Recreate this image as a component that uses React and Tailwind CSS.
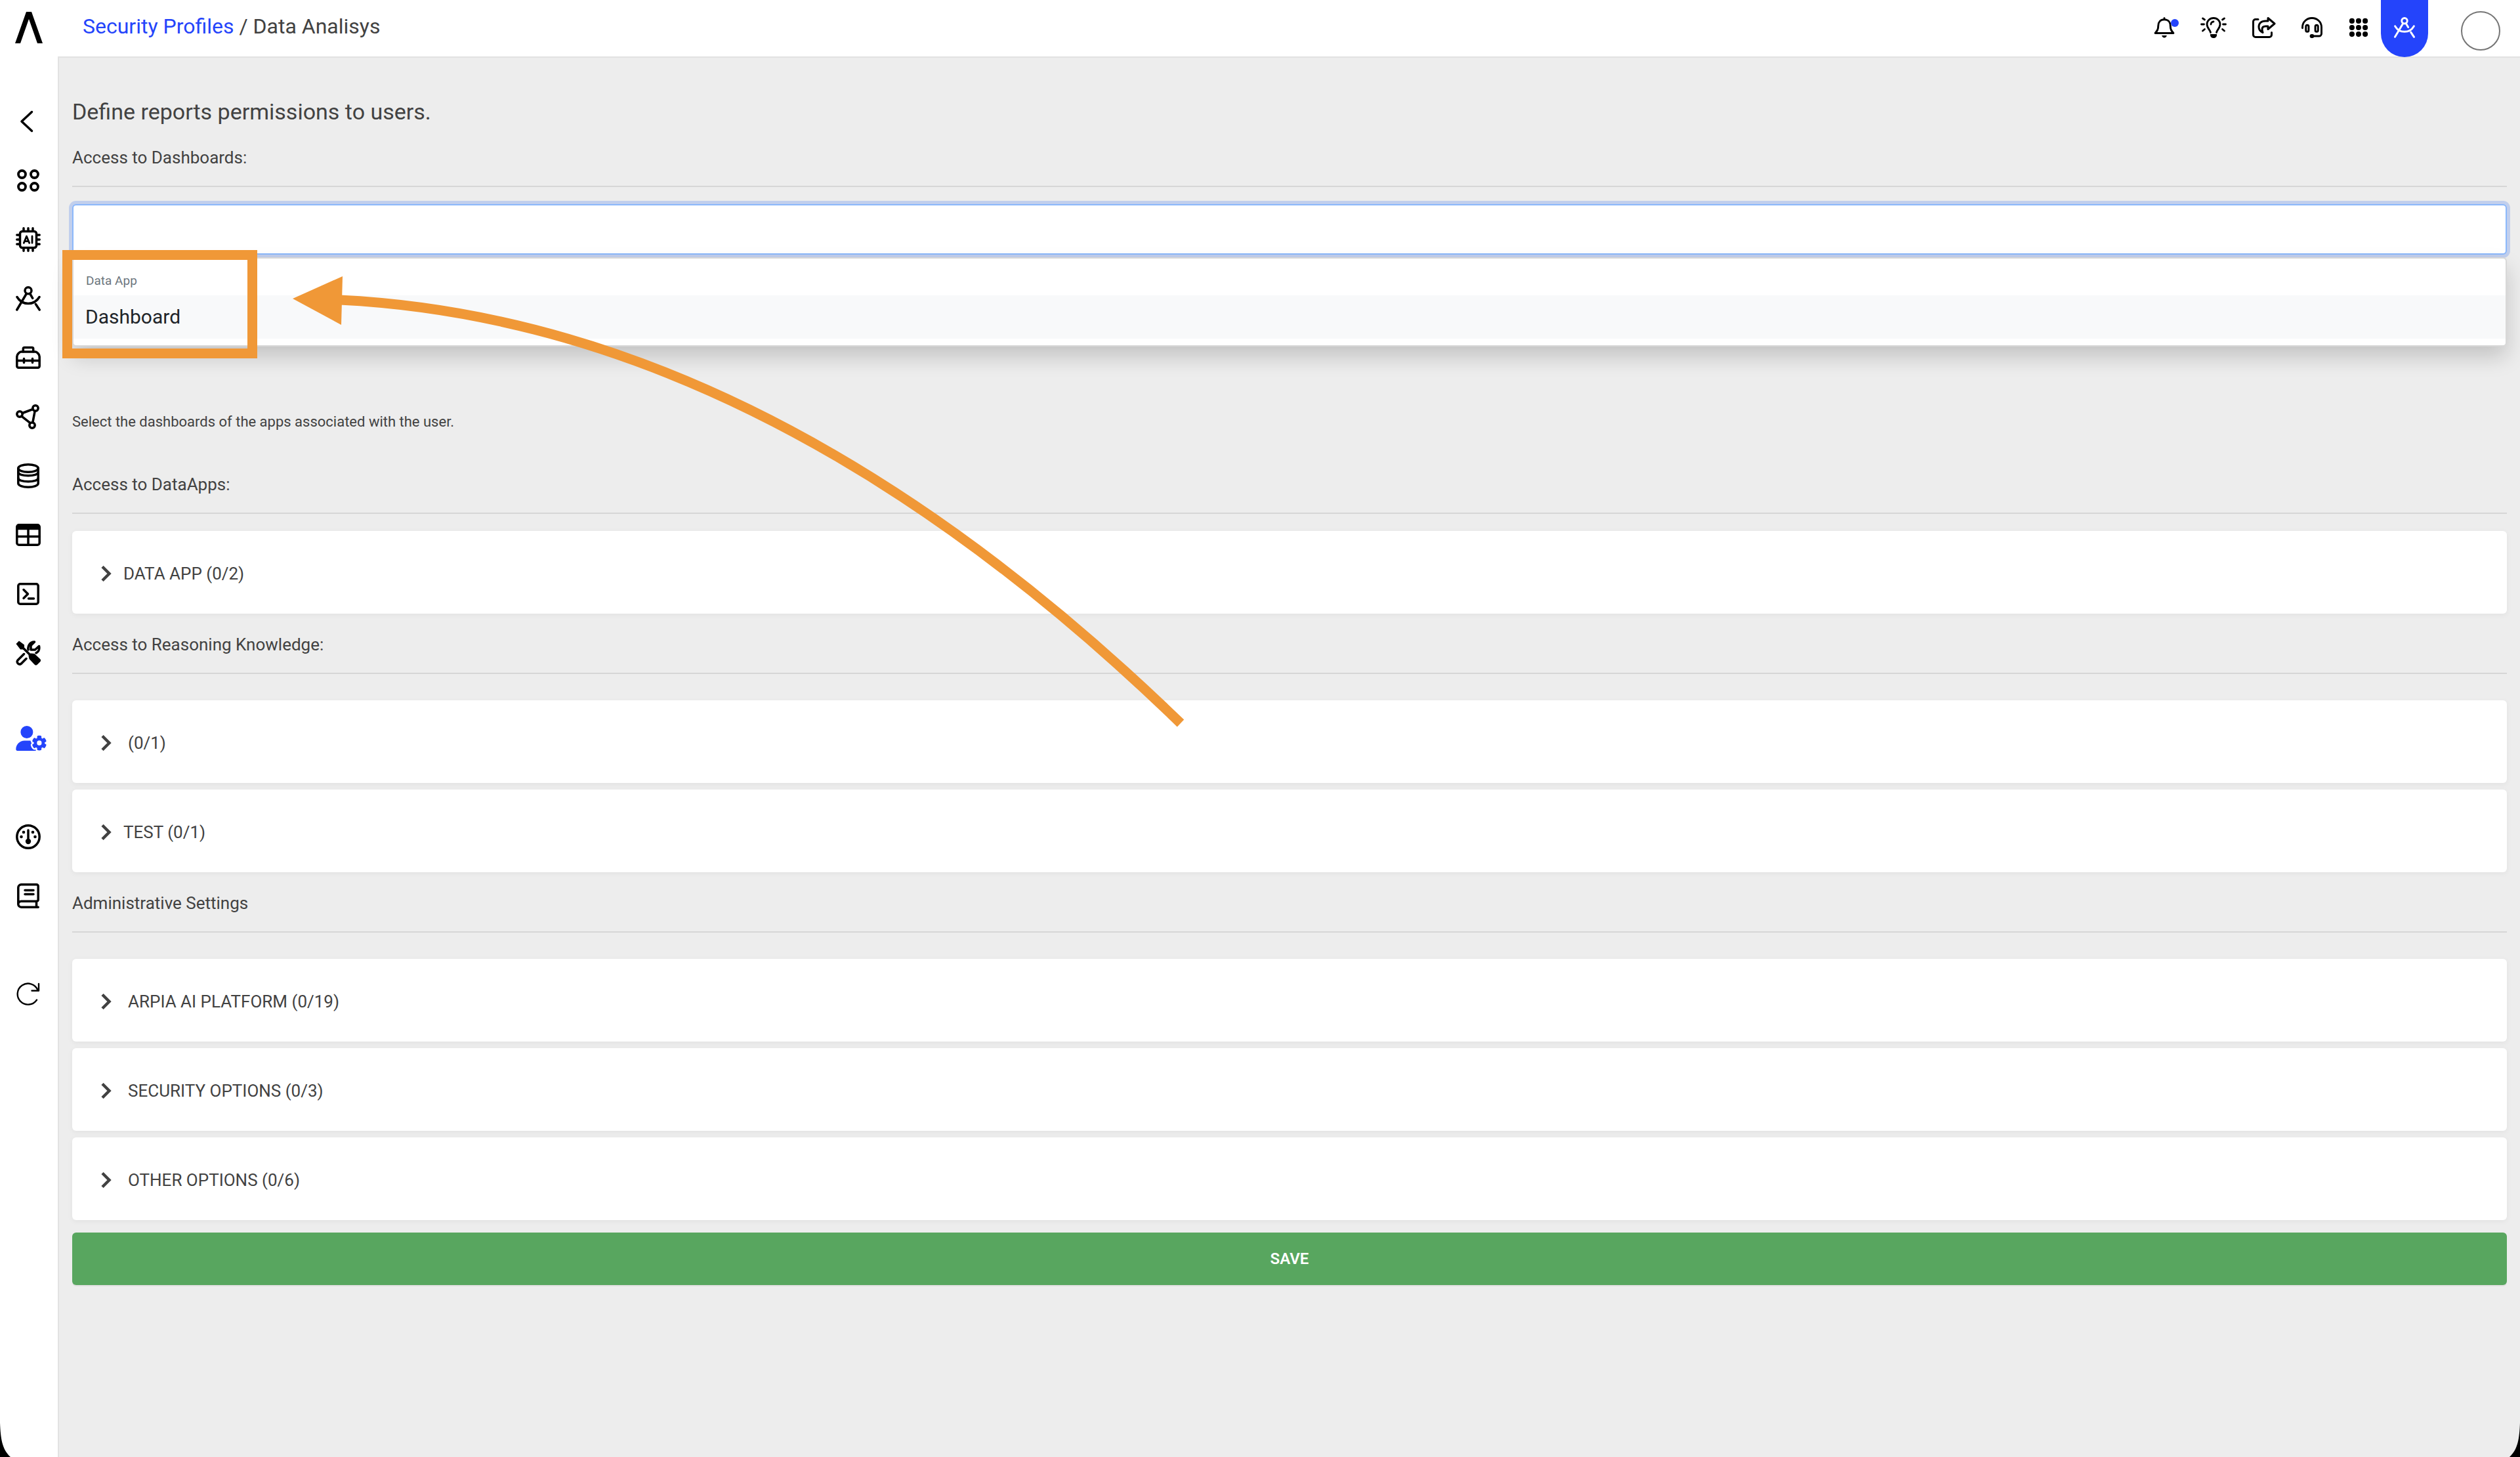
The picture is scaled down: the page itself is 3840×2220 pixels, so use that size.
import { useState } from "react"
import { FaUserGear } from "react-icons/fa6"

const Icon = ({ children, size = 38, width = 3.5, className = "" }) => (
    <svg
        width={size}
        height={size}
        viewBox="0 0 38 38"
        fill="none"
        stroke="currentColor"
        strokeWidth={width}
        strokeLinecap="round"
        strokeLinejoin="round"
        className={`shrink-0 ${className}`}
        aria-hidden="true"
    >
        {children}
    </svg>
)

const LogoIcon = () => (
    <svg width="42" height="48" viewBox="0 0 42 48" aria-hidden="true">
        <path d="M17 0h8l17 48h-8L21 11 8 48H0z" fill="#000" />
    </svg>
)

const BackIcon = () => (
    <Icon width={3.5}><path d="M24.5 4.500 L9 19 L24.5 33.500" /></Icon>
)

const CirclesIcon = () => (
    <Icon width={3.8}>
        <circle cx="9.500" cy="9.500" r="5.500" />
        <circle cx="28.500" cy="9.500" r="5.500" />
        <circle cx="9.500" cy="28.500" r="5.500" />
        <circle cx="28.500" cy="28.500" r="5.500" />
    </Icon>
)

const ChipIcon = () => (
    <Icon>
        <rect x="6.500" y="6.500" width="25" height="25" rx="3.500" />
        <path
            strokeWidth="3.500"
            d="M12 1.800v4M19 1.800v4M26 1.800v4M12 32.200v4M19 32.200v4M26 32.200v4M1.800 12h4M1.800 19h4M1.800 26h4M32.200 12h4M32.200 19h4M32.200 26h4"
        />
        <path strokeWidth="2.800" d="M12.300 24.200L16.500 14l4.200 10.200M13.800 21.600h5.400M25 14v10.200" />
    </Icon>
)

const CompassIcon = ({ size }) => (
    <Icon size={size}>
        <circle cx="19" cy="6.800" r="5" />
        <path d="M16.300 11.500L1.800 36M21.700 11.500l4 6.800M30.500 27.500L36.200 36" />
        <path d="M2 16.500c3.500 6 9.500 10 17 10s13.500-4 17-10" />
    </Icon>
)

const ToolboxIcon = () => (
    <Icon>
        <path d="M1.800 17.500a7 7 0 0 1 2-4.800l1.600-1.500a4 4 0 0 1 2.800-1.100h21.600a4 4 0 0 1 2.800 1.100l1.600 1.500a7 7 0 0 1 2 4.800v14.300a2.500 2.500 0 0 1-2.500 2.500H4.300a2.500 2.500 0 0 1-2.500-2.500z" />
        <path d="M11.300 9.800V5.500a2 2 0 0 1 2-2h11.400a2 2 0 0 1 2 2v4.300M2 23.500h34M12.500 20.500v6M25.500 20.500v6" />
    </Icon>
)

const NodesIcon = () => (
    <Icon>
        <circle cx="6" cy="15" r="4.200" />
        <circle cx="30" cy="6" r="4.200" />
        <circle cx="25" cy="32" r="4.200" />
        <path d="M10 13.500l16-6M8.800 18.200l13.400 10.500M29.200 10.200l-3.400 17.600" />
    </Icon>
)

const DatabaseIcon = () => (
    <Icon>
        <ellipse cx="19" cy="7.500" rx="15.200" ry="5.700" />
        <path d="M3.800 7.500v23c0 3.200 6.800 5.700 15.200 5.700s15.200-2.500 15.200-5.700v-23" />
        <path d="M3.800 13.500c0 3.200 6.800 5.200 15.200 5.200s15.200-2 15.200-5.200M3.800 22.500c0 3.200 6.800 5.200 15.200 5.200s15.200-2 15.200-5.200" />
    </Icon>
)

const TableIcon = () => (
    <Icon>
        <rect x="1.800" y="3.800" width="34.400" height="30.400" rx="3" />
        <path d="M2 5h34v6H2z" fill="currentColor" stroke="none" />
        <path d="M2 9.500h34M2 21.500h34M19 10v24" />
    </Icon>
)

const TerminalIcon = () => (
    <Icon>
        <rect x="3.800" y="3.800" width="30.400" height="30.400" rx="3" />
        <path d="M12 12.500l6.500 6.500-6.500 6.500M19.500 26h8" />
    </Icon>
)

const ToolsIcon = () => (
    <Icon>
        <path d="M12 12l12 12" />
        <path d="M0.500 5L5 0.500 13 6.500v5.500l-1.500 1.500H7z" fill="currentColor" stroke="none" />
        <path d="M19.500 23c0-2 1.500-3.500 4-3.500l5 .500 8.500 8c1.500 1.500 1.500 3 0 4.500l-4 4c-1.500 1.500-3 1.500-4.500 0l-8-8.500z" fill="currentColor" stroke="none" />
        <path d="M12.500 20.500L3 30a3.800 3.800 0 0 0 5.300 5.300L16 27.500" />
        <path d="M19 14c-1-5 2-12 9.500-12l-5.500 5.500v6.500h6.500L35.500 8.500c1 4.500-1 8.500-4.500 10.500" />
    </Icon>
)

const GaugeIcon = () => (
    <Icon>
        <circle cx="19" cy="19" r="17.200" />
        <path d="M19 9v15" />
        <g fill="currentColor" stroke="none">
            <circle cx="19" cy="26" r="4.200" />
            <circle cx="12" cy="12" r="2.300" />
            <circle cx="26" cy="12" r="2.300" />
            <circle cx="8.500" cy="19" r="2.300" />
            <circle cx="29.500" cy="19" r="2.300" />
        </g>
    </Icon>
)

const BookIcon = () => (
    <Icon>
        <path d="M34.200 36.200H8.300a4.500 4.500 0 0 1-4.500-4.500V6.300a4.500 4.500 0 0 1 4.500-4.500h23.400a2.500 2.500 0 0 1 2.500 2.500v20.400a2.500 2.500 0 0 1-2.500 2.500H8.300a4.500 4.500 0 0 0-4.500 4.500M31.500 27.500v8.500M14 10.500h13M14 16.500h13" />
    </Icon>
)

const RefreshIcon = () => (
    <Icon width={2.4}>
        <path d="M33.500 12.500A16 16 0 1 0 32 27.500M35 3v10.500H24.500" />
    </Icon>
)

const BellIcon = () => (
    <Icon size={32}>
        <path d="M19 2v2M19 4.500c-7 0-11 5-11 11.500 0 6.500-2 9-5.500 13h33c-3.500-4-5.500-6.500-5.500-13 0-6.500-4-11.500-11-11.500z" />
        <path d="M14.500 33.300h9c-.5 2.700-2.200 4.200-4.500 4.200s-4-1.500-4.500-4.200z" fill="currentColor" stroke="none" />
    </Icon>
)

const BulbIcon = () => (
    <svg width="40" height="32" viewBox="0 0 40 32" fill="none" stroke="currentColor" strokeWidth="2.800" strokeLinecap="round" strokeLinejoin="round" className="shrink-0" aria-hidden="true">
        <path d="M15.500 23.500c-.5-4-5.500-6.500-5.500-12.500a10 9.500 0 0 1 20 0c0 6-5 8.500-5.500 12.500M16 11a4 4 0 0 1 4-4M1.500 11h4M34.500 11h4M3.500 2l3 2M36.500 2l-3 2M3.500 21l3-2.500M36.500 21l-3-2.500" />
        <path d="M15 26h10v1.500c0 2.500-2 4.500-5 4.500s-5-2-5-4.500z" fill="currentColor" stroke="none" />
    </svg>
)

const ShareIcon = () => (
    <svg width="36" height="32" viewBox="0 0 36 32" fill="none" stroke="currentColor" strokeWidth="3" strokeLinecap="round" strokeLinejoin="round" className="shrink-0" aria-hidden="true">
        <path d="M9 3.500H5A3.500 3.500 0 0 0 1.500 7v20A3.500 3.500 0 0 0 5 30.500h21a3.500 3.500 0 0 0 3.500-3.500v-3.500" />
        <path d="M24 1.500l10 8.500-10 8.500V14h-3.500c-4 0-5.500 2-5.500 4.500 0 2 .5 3.500 1 5-3.500-1.500-6-4.500-6-8.500 0-5.500 4-9 10-9h4z" />
    </svg>
)

const HeadsetIcon = () => (
    <Icon size={32}>
        <path d="M1.800 20v-2a17.200 16.200 0 0 1 34.400 0v12a4.500 4.500 0 0 1-4.500 4.500H19" />
        <rect x="8" y="14.500" width="5" height="12" rx="2.500" />
        <rect x="25" y="14.500" width="5" height="12" rx="2.500" />
        <rect x="15" y="31" width="8" height="7" rx="3.500" fill="currentColor" stroke="none" />
    </Icon>
)

const GridIcon = () => (
    <Icon size={32}>
        <g fill="currentColor" stroke="none">
            {[7, 19, 31].map((cy) => [7, 19, 31].map((cx) => (
                <circle key={`${cx}-${cy}`} cx={cx} cy={cy} r="4.800" />
            )))}
        </g>
    </Icon>
)

const sidebarItems = [
    { label: "Back", icon: <BackIcon /> },
    { label: "Workspaces", icon: <CirclesIcon /> },
    { label: "AI", icon: <ChipIcon /> },
    { label: "Design", icon: <CompassIcon /> },
    { label: "Toolbox", icon: <ToolboxIcon /> },
    { label: "Nodes", icon: <NodesIcon /> },
    { label: "Database", icon: <DatabaseIcon /> },
    { label: "Tables", icon: <TableIcon /> },
    { label: "Terminal", icon: <TerminalIcon /> },
    { label: "Tools", icon: <ToolsIcon /> },
    { label: "Users", icon: <FaUserGear className="h-[38px] w-[48px] shrink-0 text-[#2444fb]" />, className: "mt-10" },
    { label: "Monitor", icon: <GaugeIcon />, className: "mt-[60px]" },
    { label: "Docs", icon: <BookIcon /> },
    { label: "Refresh", icon: <RefreshIcon />, className: "mt-[60px]" },
]

const Sidebar = () => (
    <nav className="w-[90px] shrink-0 border-r-2 border-[#e2e2e2] bg-white pt-[54px] text-black">
        {sidebarItems.map(({ label, icon, className = "" }) => (
            <button key={label} type="button" aria-label={label} className={`flex h-[90px] w-full items-center pl-6 ${className}`}>
                {icon}
            </button>
        ))}
    </nav>
)

const Header = () => (
    <header className="flex h-[86px] items-start bg-white text-black">
        <a href="#home" aria-label="Home" className="ml-[23px] mt-[18px]"><LogoIcon /></a>
        <p className="ml-[61px] mt-5 text-[32px] leading-10 text-[#424242]">
            <a href="#profiles" className="text-[#2444fb]">Security Profiles</a> / Data Analisys
        </p>
        <div className="ml-auto flex h-[84px] items-center gap-[39px] pr-[18px]">
            <button type="button" aria-label="Notifications" className="relative">
                <BellIcon />
                <span className="absolute -right-[6px] top-[3px] size-3 rounded-full bg-[#2444fb]" />
            </button>
            <button type="button" aria-label="Tips"><BulbIcon /></button>
            <button type="button" aria-label="Share"><ShareIcon /></button>
            <button type="button" aria-label="Support"><HeadsetIcon /></button>
            <button type="button" aria-label="Apps"><GridIcon /></button>
        </div>
        <button type="button" aria-label="Design" className="relative flex h-[87px] w-[72px] items-center justify-center rounded-b-[36px] bg-[#2444fb] pb-[3px] text-white">
            <CompassIcon size={32} />
        </button>
        <button type="button" aria-label="Account" className="ml-[50px] mr-[30px] mt-[17px] size-[60px] rounded-full border-2 border-[#757575]" />
    </header>
)

const Section = ({ title, htmlFor, className = "" }) => (
    <div className={`border-b-2 border-[#d6d6d6] pb-[27px] text-[26px] leading-8 ${className}`}>
        {htmlFor ? <label htmlFor={htmlFor} className="block">{title}</label> : <h2>{title}</h2>}
    </div>
)

const Group = ({ name, count, spaced }) => {
    const [open, setOpen] = useState(false)

    return (
        <button
            type="button"
            aria-expanded={open}
            onClick={() => setOpen(!open)}
            className="flex h-[126px] w-full items-center rounded-md bg-white pl-11 pt-[3px] text-left text-[26px] leading-8 shadow-[0_2px_8px_rgba(0,0,0,0.05)]"
        >
            <svg width="16" height="24" viewBox="0 0 16 24" fill="none" stroke="currentColor" strokeWidth="4.500" aria-hidden="true">
                <path d="M2 1.500L12.500 12 2 22.500" />
            </svg>
            <span className={spaced ? "ml-[25px]" : "ml-[18px]"}>{name} {count}</span>
        </button>
    )
}

const DashboardPicker = () => {
    const [query, setQuery] = useState("")

    return (
        <div className="relative mt-[26px]">
            <input
                id="dashboards"
                type="text"
                value={query}
                onChange={(e) => setQuery(e.target.value)}
                className="block h-[77px] w-full rounded-md border-2 border-[#8bb8fb] bg-white px-[18px] text-[30px] outline-none ring-5 ring-[#2563eb]/22"
            />
            <div className="absolute inset-x-0 top-full mt-1 rounded-md border-2 border-[#d8d8d8] bg-white pb-[10px] shadow-[0_16px_32px_rgba(0,0,0,0.175)]">
                <p className="px-[19px] pb-2 pt-5 text-[19px] leading-7 text-[#6c757d]">Data App</p>
                <button type="button" className="block h-[66px] w-full bg-[#f8f9fa] px-[18px] text-left text-[30px] leading-10 text-[#212529]">
                    Dashboard
                </button>
            </div>
        </div>
    )
}

// Hint drawn over the form: frame round the option plus the arrow that leads to it
const Hint = () => (
    <>
        <div className="pointer-events-none absolute left-[95px] top-[381px] h-[165px] w-[297px] border-15 border-[#f09837]" />
        <svg className="pointer-events-none absolute left-[440px] top-[410px]" width="1380" height="710" viewBox="440 410 1380 710" aria-hidden="true">
            <path d="M518 457 Q1167 489 1799 1102" fill="none" stroke="#f09837" strokeWidth="15" />
            <path d="M446 455L522 421L520 495z" fill="#f09837" />
        </svg>
    </>
)

export default function App() {
    return (
        <div className="relative flex min-h-screen flex-col overflow-hidden bg-[#ededed] font-['Roboto',sans-serif] text-[#424242]">
            <Header />
            <div className="flex flex-1">
                <Sidebar />
                <main className="min-w-0 flex-1 border-t-2 border-[#e2e2e2] pl-5 pr-5 pt-[58px]">
                    <h1 className="text-[34px] leading-[48px]">Define reports permissions to users.</h1>

                    <Section title="Access to Dashboards:" htmlFor="dashboards" className="mt-[30px]" />
                    <DashboardPicker />
                    <p className="mt-[241px] text-[22px] leading-7">Select the dashboards of the apps associated with the user.</p>

                    <Section title="Access to DataApps:" className="mt-[65px]" />
                    <div className="mt-[26px]">
                        <Group name="DATA APP" count="(0/2)" />
                    </div>

                    <Section title="Access to Reasoning Knowledge:" className="mt-[31px]" />
                    <div className="mt-10 flex flex-col gap-[10px]">
                        <Group name="" count="(0/1)" spaced />
                        <Group name="TEST" count="(0/1)" />
                    </div>

                    <Section title="Administrative Settings" className="mt-[31px]" />
                    <div className="mt-10 flex flex-col gap-[10px]">
                        <Group name="ARPIA AI PLATFORM" count="(0/19)" spaced />
                        <Group name="SECURITY OPTIONS" count="(0/3)" spaced />
                        <Group name="OTHER OPTIONS" count="(0/6)" spaced />
                    </div>

                    <button type="submit" className="mt-[19px] block h-20 w-full rounded-md bg-[#58a65f] text-[24px] font-semibold leading-8 text-white shadow-[0_2px_0_rgba(0,0,0,0.06)]">
                        SAVE
                    </button>
                </main>
            </div>

            <Hint />

            <svg className="absolute bottom-0 left-0" width="16" height="52" viewBox="0 0 16 52" aria-hidden="true">
                <path d="M0 0C1 24 3 40 16 52H0z" fill="#000" />
            </svg>
            <svg className="absolute bottom-0 right-0" width="16" height="52" viewBox="0 0 16 52" aria-hidden="true">
                <path d="M16 0C15 24 13 40 0 52H16z" fill="#000" />
            </svg>
        </div>
    )
}
